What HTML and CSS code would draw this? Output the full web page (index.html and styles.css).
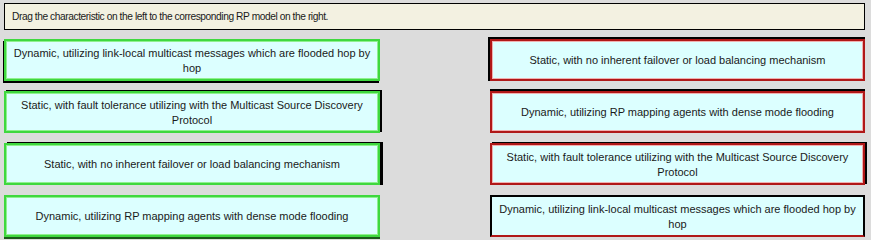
FILE: index.html
```html
<!DOCTYPE html>
<html>
<head>
<meta charset="utf-8">
<link rel="stylesheet" href="styles.css">
</head>
<body>
<div class="page">
  <div class="prompt">Drag the characteristic on the left to the corresponding RP model on the right.</div>
  <div class="board">
    <div class="col">
      <div class="slot"><div class="card green sh-dl">Dynamic, utilizing link-local multicast messages which are flooded hop by hop</div></div>
      <div class="slot"><div class="card green sh-ur">Static, with fault tolerance utilizing with the Multicast Source Discovery Protocol</div></div>
      <div class="slot"><div class="card green sh-r">Static, with no inherent failover or load balancing mechanism</div></div>
      <div class="slot"><div class="card green sh-b">Dynamic, utilizing RP mapping agents with dense mode flooding</div></div>
    </div>
    <div class="col right">
      <div class="slot"><div class="card red sh-ul">Static, with no inherent failover or load balancing mechanism</div></div>
      <div class="slot"><div class="card red sh-u">Dynamic, utilizing RP mapping agents with dense mode flooding</div></div>
      <div class="slot"><div class="card red sh-ur">Static, with fault tolerance utilizing with the Multicast Source Discovery Protocol</div></div>
      <div class="slot"><div class="card red sh-d">Dynamic, utilizing link-local multicast messages which are flooded hop by hop</div></div>
    </div>
  </div>
</div>
</body>
</html>
```

FILE: styles.css
```css
html, body {
  margin: 0;
  padding: 0;
  background: #dcdcdc;
}
.page {
  width: 871px;
  height: 240px;
  padding: 3px 6px 0 4px;
  box-sizing: border-box;
  font-family: "Liberation Sans", Arial, sans-serif;
  color: #1a1a1a;
  overflow: hidden;
}
.prompt {
  height: 27px;
  box-sizing: border-box;
  border: 1px solid #000;
  background: #f3f1e1;
  display: flex;
  align-items: center;
  padding: 0 0 1px 7px;
  font-size: 10.2px;
  letter-spacing: -0.42px;
}
.board {
  display: grid;
  grid-template-columns: 376px 375px;
  column-gap: 110px;
  margin-top: 9px;
}
.col {
  display: flex;
  flex-direction: column;
  gap: 10px;
}
.slot {
  height: 42px;
}
.card {
  height: 100%;
  box-sizing: border-box;
  background: #dcffff;
  display: flex;
  align-items: center;
  justify-content: center;
  text-align: center;
  font-size: 11px;
  line-height: 15px;
  padding: 1px 3px 0;
}
.green {
  border: 2px solid #3fd83f;
  outline: 1px solid #8ff08f;
  outline-offset: -3px;
}
.red {
  border: 2px solid #b01818;
  outline: 1px solid #f0b0b0;
  outline-offset: -3px;
}
.sh-dl { box-shadow: -1px 2px 0 0 #000; }
.sh-ur { box-shadow: 2px -1px 0 0 #000; }
.sh-r  { box-shadow: 3px 0 0 0 #000, 3px -1px 0 0 #000; }
.sh-b  { box-shadow: 0 2px 0 0 #1a5a1a; }
.sh-ul { box-shadow: -1px -1px 0 1px #000; }
.sh-u  { box-shadow: 0 -2px 0 0 #000; }
.sh-d  { border-top-color: #000; border-left-color: #000; border-right-color: #000; outline-color: transparent; }
```
